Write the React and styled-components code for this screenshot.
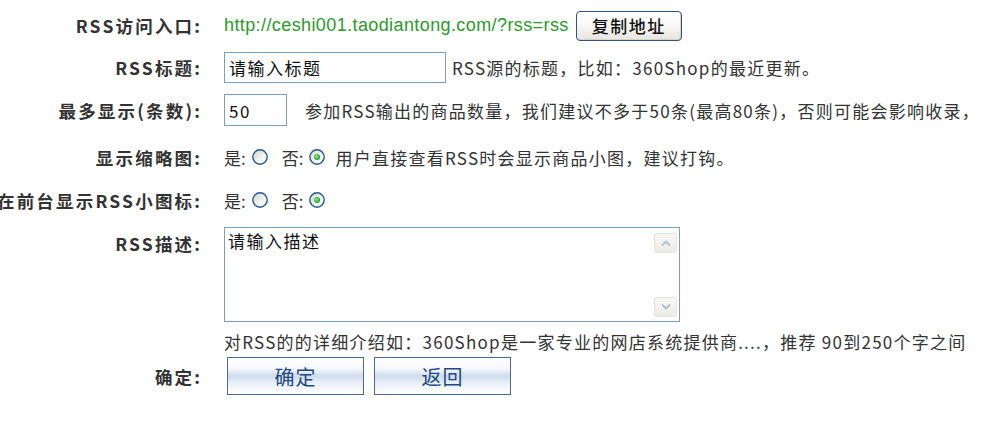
import React from "react";
import styled, { createGlobalStyle } from "styled-components";

const GlobalStyle = createGlobalStyle`
  html, body { margin: 0; padding: 0; background: #ffffff; }
  body {
    font-family: "Noto Sans CJK SC", "Liberation Sans", sans-serif;
    color: #333333;
    overflow: hidden;
  }
`;

const Form = styled.div`
  display: flex;
  flex-direction: column;
  width: 1003px;
`;

const Row = styled.div`
  display: grid;
  grid-template-columns: 200px 1fr;
  column-gap: 24px;
  align-items: ${(p) => (p.$top ? "start" : "center")};
  height: ${(p) => p.$h}px;
  margin-top: ${(p) => p.$mt}px;
`;

const Label = styled.div`
  display: flex;
  justify-content: flex-end;
  white-space: nowrap;
  font-size: 17.5px;
  font-weight: 700;
  letter-spacing: 2.2px;
  color: #333333;
  margin-right: -2.2px;
  padding-top: ${(p) => p.$pt || 0}px;
`;

const Value = styled.div`
  display: flex;
  align-items: center;
  white-space: nowrap;
`;

const Url = styled.span`
  font-family: "Liberation Sans", Arial, sans-serif;
  font-size: 18px;
  letter-spacing: 0.4px;
  color: #2a9a2a;
`;

const CopyButton = styled.button`
  margin-left: 7px;
  width: 106px;
  height: 30px;
  border: 1px solid #34527c;
  border-radius: 4px;
  background: linear-gradient(to bottom, #ffffff 0%, #f7f7f3 50%, #e6e5de 100%);
  font-family: "Noto Sans CJK SC", sans-serif;
  font-size: 17px;
  font-weight: 500;
  letter-spacing: 1.5px;
  color: #111111;
  padding: 0;
  box-shadow: inset -1px -1px 0 #d6d3c6;
`;

const TextInput = styled.input`
  box-sizing: border-box;
  width: ${(p) => p.$w}px;
  height: ${(p) => p.$h}px;
  border: 1px solid #7f9db9;
  padding: 0 4px;
  font-family: "Noto Sans CJK SC", sans-serif;
  font-size: 17px;
  letter-spacing: 1.5px;
  color: #111111;
  background: #ffffff;
  outline: none;
`;

const Help = styled.span`
  margin-left: ${(p) => p.$ml || 0}px;
  font-size: 17px;
  letter-spacing: 1.25px;
  color: #333333;
`;

const ChoiceText = styled.span`
  font-size: 17px;
  letter-spacing: 0;
  color: #333333;
`;

const RadioWrap = styled.span`
  display: inline-flex;
  flex: none;
  width: 16px;
  height: 16px;
  margin: 0 ${(p) => p.$mr}px 0 ${(p) => p.$ml}px;
`;

const Radio = ({ checked, ml, mr }) => (
  <RadioWrap $ml={ml} $mr={mr}>
    <svg width="16" height="16" viewBox="0 0 16 16">
      <defs>
        <linearGradient id="radioFill" x1="0" y1="0" x2="1" y2="1">
          <stop offset="0" stopColor="#d2d2ca" />
          <stop offset="0.6" stopColor="#f4f4f0" />
          <stop offset="1" stopColor="#ffffff" />
        </linearGradient>
        <radialGradient id="radioDot" cx="0.4" cy="0.4" r="0.6">
          <stop offset="0" stopColor="#9ae69a" />
          <stop offset="1" stopColor="#1f9f1f" />
        </radialGradient>
      </defs>
      <circle cx="8" cy="8" r="7.2" fill="url(#radioFill)" stroke="#245a92" strokeWidth="1.4" />
      {checked && <circle cx="8" cy="8" r="3" fill="url(#radioDot)" />}
    </svg>
  </RadioWrap>
);

const AreaBox = styled.div`
  box-sizing: border-box;
  display: flex;
  width: 456px;
  height: 95px;
  border: 1px solid #7f9db9;
  background: #ffffff;
`;

const Area = styled.textarea`
  flex: 1;
  border: none;
  outline: none;
  resize: none;
  overflow: hidden;
  padding: 2px 3px;
  margin: 0;
  font-family: "Noto Sans CJK SC", sans-serif;
  font-size: 17px;
  letter-spacing: 1.5px;
  line-height: 22px;
  color: #111111;
`;

const ScrollTrack = styled.div`
  display: flex;
  flex-direction: column;
  justify-content: space-between;
  width: 24px;
  padding: 5px 1px 4px 0;
`;

const ArrowBtn = styled.div`
  display: flex;
  align-items: center;
  justify-content: center;
  width: 23px;
  height: 20px;
  box-sizing: border-box;
  border: 1px solid #e2e3dc;
  border-radius: 3px;
  background: linear-gradient(to bottom, #f8f8f5, #ecebe5);
`;

const Arrow = ({ up }) => (
  <ArrowBtn>
    <svg width="12" height="8" viewBox="0 0 12 8">
      <path
        d={up ? "M2 6.5 L6 2.5 L10 6.5" : "M2 1.5 L6 5.5 L10 1.5"}
        fill="none"
        stroke="#b5bdcb"
        strokeWidth="1.8"
      />
    </svg>
  </ArrowBtn>
);

const Buttons = styled.div`
  display: flex;
  gap: 10px;
  margin-left: 3px;
`;

const BlueButton = styled.button`
  width: 137px;
  height: 38px;
  border: 1px solid #4b6a96;
  padding: 0;
  background: linear-gradient(
    to bottom,
    #ffffff 0%,
    #f5f8fc 30%,
    #cfdcec 50%,
    #e9f0f8 70%,
    #ffffff 100%
  );
  font-family: "Noto Sans CJK SC", sans-serif;
  font-size: 20px;
  letter-spacing: 1px;
  color: #23497e;
`;

export default function App() {
  return (
    <>
      <GlobalStyle />
      <Form>
        <Row $mt={10} $h={31}>
          <Label>RSS访问入口:</Label>
          <Value>
            <Url>http://ceshi001.taodiantong.com/?rss=rss</Url>
            <CopyButton>复制地址</CopyButton>
          </Value>
        </Row>
        <Row $mt={11} $h={31}>
          <Label>RSS标题:</Label>
          <Value>
            <TextInput $w={222} $h={31} defaultValue="请输入标题" />
            <Help $ml={6}>RSS源的标题，比如：360Shop的最近更新。</Help>
          </Value>
        </Row>
        <Row $mt={11} $h={32}>
          <Label>最多显示(条数):</Label>
          <Value>
            <TextInput $w={63} $h={32} defaultValue="50" />
            <Help $ml={18}>参加RSS输出的商品数量，我们建议不多于50条(最高80条)，否则可能会影响收录，</Help>
          </Value>
        </Row>
        <Row $mt={16} $h={30}>
          <Label>显示缩略图:</Label>
          <Value>
            <ChoiceText>是:</ChoiceText>
            <Radio ml={6} mr={14} />
            <ChoiceText>否:</ChoiceText>
            <Radio ml={6} mr={10} checked />
            <Help>用户直接查看RSS时会显示商品小图，建议打钩。</Help>
          </Value>
        </Row>
        <Row $mt={13} $h={30}>
          <Label>在前台显示RSS小图标:</Label>
          <Value>
            <ChoiceText>是:</ChoiceText>
            <Radio ml={6} mr={14} />
            <ChoiceText>否:</ChoiceText>
            <Radio ml={6} mr={10} checked />
          </Value>
        </Row>
        <Row $mt={12} $h={95} $top>
          <Label $pt={4}>RSS描述:</Label>
          <AreaBox>
            <Area defaultValue="请输入描述" />
            <ScrollTrack>
              <Arrow up />
              <Arrow />
            </ScrollTrack>
          </AreaBox>
        </Row>
        <Row $mt={7} $h={20}>
          <Label />
          <Value>
            <Help>对RSS的的详细介绍如：360Shop是一家专业的网店系统提供商....，推荐 90到250个字之间</Help>
          </Value>
        </Row>
        <Row $mt={8} $h={38}>
          <Label>确定:</Label>
          <Buttons>
            <BlueButton>确定</BlueButton>
            <BlueButton>返回</BlueButton>
          </Buttons>
        </Row>
      </Form>
    </>
  );
}
